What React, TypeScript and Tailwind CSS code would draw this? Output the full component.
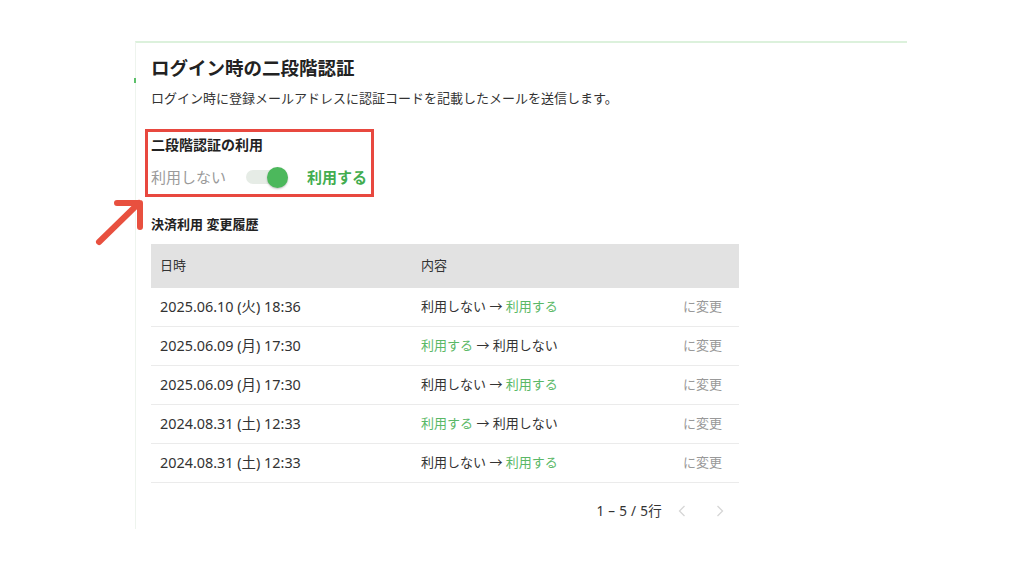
import React from "react";

const rows = [
  { date: "2025.06.10 (火) 18:36", toOn: true },
  { date: "2025.06.09 (月) 17:30", toOn: false },
  { date: "2025.06.09 (月) 17:30", toOn: true },
  { date: "2024.08.31 (土) 12:33", toOn: false },
  { date: "2024.08.31 (土) 12:33", toOn: true },
];

function Change({ toOn }: { toOn: boolean }) {
  return toOn ? (
    <span>
      <span className="text-[#333]">利用しない</span>
      <span className="text-[#333]">&nbsp;→&nbsp;</span>
      <span className="text-[#5ab866]">利用する</span>
    </span>
  ) : (
    <span>
      <span className="text-[#5ab866]">利用する</span>
      <span className="text-[#333]">&nbsp;→&nbsp;</span>
      <span className="text-[#333]">利用しない</span>
    </span>
  );
}

export default function App() {
  return (
    <div
      className="relative w-[1024px] h-[563px] bg-white overflow-hidden"
      style={{ fontFamily: '"Noto Sans", "Noto Sans CJK JP", sans-serif' }}
    >
      <div className="ml-[135px] mt-[41px] w-[772px] border-t-2 border-t-[#dcf1dc] border-l border-l-[#eef4ee] pl-[15px] pt-[12px] pb-[8px]">
        <h1 className="text-[18.5px] leading-[26px] font-bold text-[#222]">ログイン時の二段階認証</h1>
        <p className="mt-[7px] text-[13px] leading-[20px] text-[#333]">
          ログイン時に登録メールアドレスに認証コードを記載したメールを送信します。
        </p>

        <div className="-ml-[6px] mt-[21px] w-[229px] border-[3px] border-[#e8483f] pl-[3px] pt-[2px] pb-[5px]">
          <div className="text-[14px] leading-[22px] font-bold text-[#222]">二段階認証の利用</div>
          <div className="mt-[9px] flex items-center h-[24px]">
            <span className="text-[15px] text-[#9a9a9a]">利用しない</span>
            <div className="relative ml-[20px] w-[42px] h-[14px] rounded-full bg-[#e6ece6] flex items-center">
              <div className="absolute right-0 w-[21px] h-[21px] rounded-full bg-[#4cb85c] shadow-[0_1px_2px_rgba(0,0,0,0.25)]" />
            </div>
            <span className="ml-[19px] text-[15px] font-bold text-[#43ad4f]">利用する</span>
          </div>
        </div>

        <div className="mt-[17px] text-[13px] leading-[20px] font-bold text-[#222]">決済利用 変更履歴</div>

        <div className="mt-[10px] w-[588px]">
          <div className="flex items-center h-[44px] bg-[#e2e2e2] text-[13px] text-[#333]">
            <div className="w-[270px] pl-[9px]">日時</div>
            <div>内容</div>
          </div>
          {rows.map((r, i) => (
            <div key={i} className="flex items-center h-[39px] border-b border-[#ebebeb] text-[13px]">
              <div className="w-[270px] pl-[9px] text-[14.4px] text-[#333]">{r.date}</div>
              <div className="flex-1">
                <Change toOn={r.toOn} />
              </div>
              <div className="pr-[17px] text-[#999]">に変更</div>
            </div>
          ))}
        </div>

        <div className="mt-[18px] w-[588px] flex items-center justify-end h-[20px] pr-[15px] text-[13.5px] text-[#333]">
          <span className="tracking-[0.3px]">1&nbsp;–&nbsp;5&nbsp;/&nbsp;5行</span>
          <svg className="ml-[16px]" width="8" height="12" viewBox="0 0 8 12" fill="none">
            <path d="M6.5 1 L1.5 6 L6.5 11" stroke="#d6d6d6" strokeWidth="1.3" />
          </svg>
          <svg className="ml-[30px]" width="8" height="12" viewBox="0 0 8 12" fill="none">
            <path d="M1.5 1 L6.5 6 L1.5 11" stroke="#d6d6d6" strokeWidth="1.3" />
          </svg>
        </div>
      </div>

      <div className="absolute left-[134px] top-[78px] w-[2px] h-[5px] bg-[#5cc06a]" />

      <svg className="absolute left-[92px] top-[197px]" width="54" height="52" viewBox="0 0 54 52" fill="none">
        <path d="M7 45 L47 6 M25 6 L48 6 L48 30" stroke="#e8503f" strokeWidth="6" strokeLinecap="round" strokeLinejoin="round" />
      </svg>
    </div>
  );
}
